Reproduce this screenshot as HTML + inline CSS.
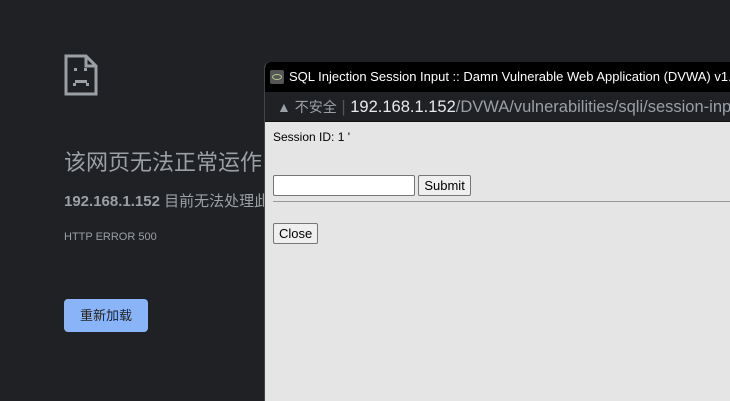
<!DOCTYPE html>
<html><head><meta charset="utf-8"><style>
*{margin:0;padding:0;box-sizing:border-box}
html,body{width:730px;height:401px;overflow:hidden}
body{background:#202124;position:relative;font-family:"Liberation Sans","Noto Sans CJK SC",sans-serif}
.a{position:absolute}
.t1{left:64px;top:145px;font-size:22px;color:#9aa0a6;white-space:nowrap}
.t2{left:64px;top:190px;font-size:15px;color:#9aa0a6;white-space:nowrap}
.t3{left:64px;top:231px;font-size:11px;color:#9aa0a6}
.btn{left:64px;top:299px;width:84px;height:33px;background:#8ab4f8;border-radius:4px;color:#202124;font-size:13px;line-height:33px;text-align:center}
.win{left:264px;top:62px;width:480px;height:339px;border-radius:6px 0 0 0;overflow:hidden;background:#e5e5e5;border-left:1px solid #444}
.tb{height:30px;background:#000;color:#fff;font-size:13px;line-height:30px;padding-left:24px;white-space:nowrap;position:relative}
.ab{height:30px;background:#202124;color:#9aa0a6;font-size:16.5px;line-height:30px;padding-left:12px;white-space:nowrap;border-bottom:1px solid #111}
.ct{font-size:12px;color:#000;padding:8px 8px}
.inp{display:inline-block;width:142px;height:21px;background:#fff;border:1px solid #767676;border-radius:2px;vertical-align:middle}
.b{display:inline-block;border:1px solid #767676;background:#efefef;border-radius:2px;font-size:13px;padding:2px 5px;vertical-align:middle}
</style></head><body>
<svg class="a" style="left:64px;top:54px" width="34" height="42"><path d="M2 2H22L32 12V40H2Z M22 2V12H32" fill="none" stroke="#9aa0a6" stroke-width="3"/><rect x="10" y="14" width="3" height="3" fill="#9aa0a6"/><rect x="20" y="14" width="3" height="3" fill="#9aa0a6"/><rect x="11" y="26" width="12" height="3" fill="#9aa0a6"/><rect x="9" y="29" width="3" height="3" fill="#9aa0a6"/><rect x="22" y="29" width="3" height="3" fill="#9aa0a6"/></svg>
<div class="a t1">该网页无法正常运作</div>
<div class="a t2"><b>192.168.1.152</b> 目前无法处理此请求。</div>
<div class="a t3">HTTP ERROR 500</div>
<div class="a btn">重新加载</div>
<div class="a win">
<div class="tb"><span class="a" style="left:5px;top:8px;width:14px;height:14px;background:#555;border-radius:2px"><span class="a" style="left:2px;top:4px;width:10px;height:6px;border:1px solid #b5c98a;border-radius:50%"></span></span>SQL Injection Session Input :: Damn Vulnerable Web Application (DVWA) v1.10</div>
<div class="ab"><span style="font-size:14px">▲ 不安全</span> <span style="color:#555">|</span> <span style="color:#e8eaed">192.168.1.152</span>/DVWA/vulnerabilities/sqli/session-input.php</div>
<div class="ct">Session ID: 1 '<div style="height:31px"></div>
<span class="inp"></span> <span class="b">Submit</span>
<div style="border-top:1px solid #999;margin:5px -8px 0 0;height:22px"></div>
<span class="b">Close</span></div>
</div>
</body></html>
